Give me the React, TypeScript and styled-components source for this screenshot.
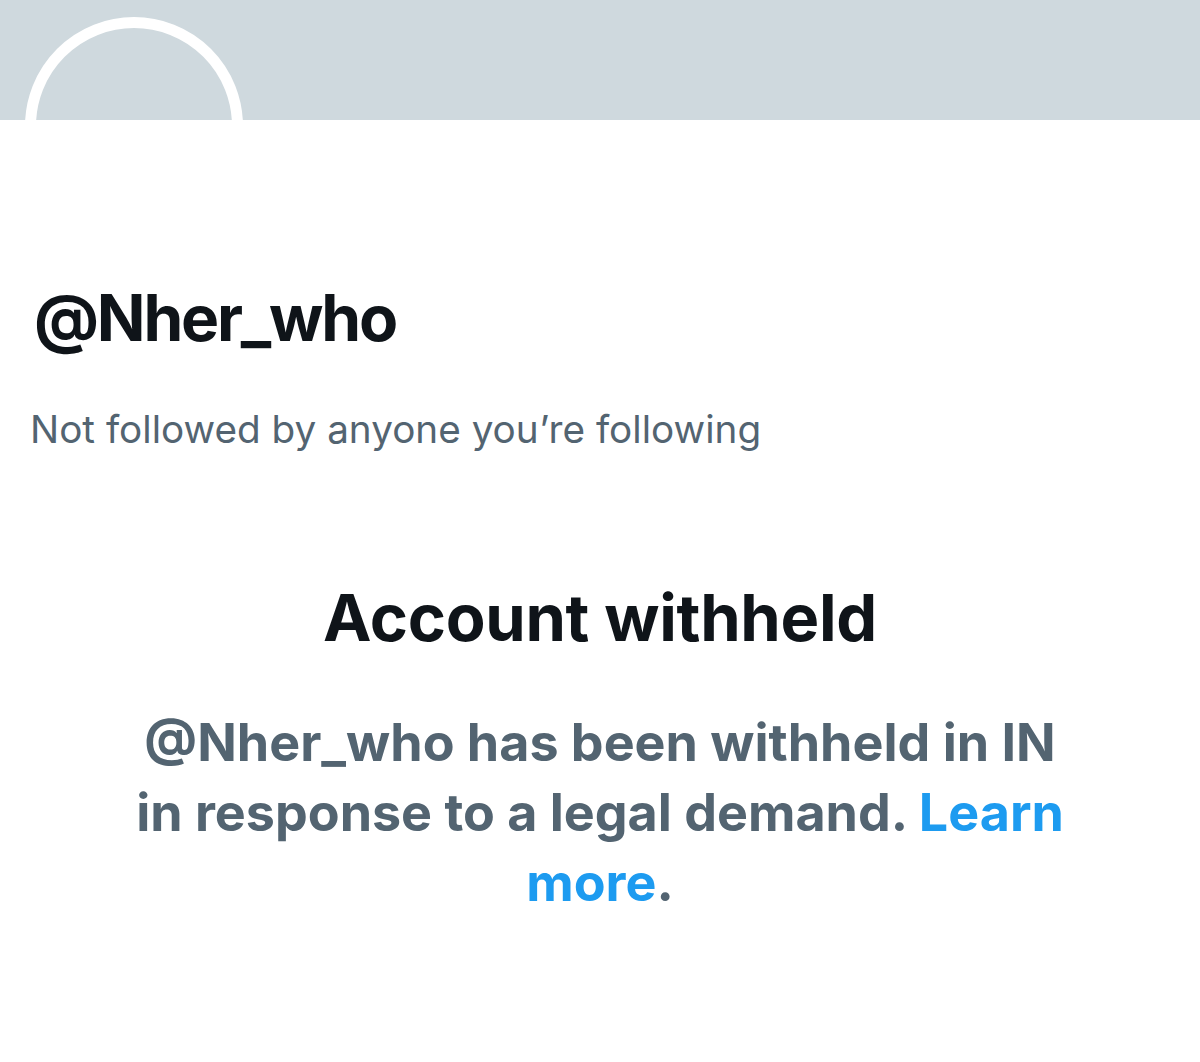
import React from 'react';
import styled, { createGlobalStyle } from 'styled-components';

const GlobalStyle = createGlobalStyle`
    html, body {
        margin: 0;
        padding: 0;
        background: #fff;
    }
    body {
        font-family: Inter, "Noto Sans", "Liberation Sans", sans-serif;
        -webkit-font-smoothing: antialiased;
    }
`;

const Page = styled.div`
    width: 1200px;
    height: 1062px;
    background: #fff;
    overflow: hidden;
`;

const Banner = styled.div`
    position: relative;
    height: 120px;
    background: #cfd9de;
    overflow: hidden;
`;

const AvatarRing = styled.div`
    position: absolute;
    left: 25px;
    top: 17px;
    width: 218px;
    height: 218px;
    box-sizing: border-box;
    border-radius: 50%;
    border: 11px solid #fff;
    background: #cfd9de;
`;

const Profile = styled.div`
    padding: 0 30px;
`;

const Handle = styled.h1`
    margin: 0;
    padding-top: 158px;
    padding-left: 4px;
    font-size: 64px;
    line-height: 80px;
    font-weight: 700;
    color: #0f1419;
    letter-spacing: -2.2px;
`;

const FollowNote = styled.p`
    margin: 0;
    padding-top: 48px;
    font-size: 38.7px;
    line-height: 46px;
    font-weight: 400;
    color: #536471;
`;

const Withheld = styled.section`
    display: flex;
    flex-direction: column;
    align-items: center;
    text-align: center;
    padding-top: 126px;
`;

const Title = styled.h2`
    margin: 0;
    font-size: 65px;
    line-height: 80px;
    font-weight: 700;
    color: #0f1419;
    letter-spacing: -0.3px;
`;

const Message = styled.p`
    margin: 0;
    margin-top: 50px;
    max-width: 960px;
    font-size: 52px;
    line-height: 70px;
    font-weight: 700;
    color: #536471;
`;

const Link = styled.a`
    color: #1d9bf0;
    text-decoration: none;
`;

export default function App() {
    return (
        <Page>
            <GlobalStyle />
            <Banner>
                <AvatarRing />
            </Banner>
            <Profile>
                <Handle>@Nher_who</Handle>
                <FollowNote>Not followed by anyone you’re following</FollowNote>
            </Profile>
            <Withheld>
                <Title>Account withheld</Title>
                <Message>
                    @Nher_who has been withheld in IN in response to a legal demand. <Link href="#">Learn more</Link>.
                </Message>
            </Withheld>
        </Page>
    );
}
